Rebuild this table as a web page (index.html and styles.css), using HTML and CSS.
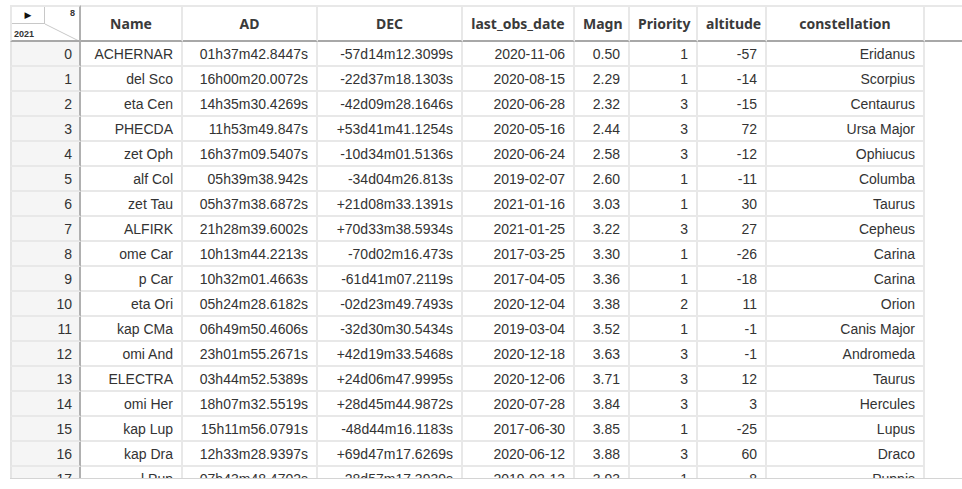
FILE: index.html
```html
<!DOCTYPE html>
<html>
<head>
<meta charset="utf-8">
<link rel="stylesheet" href="styles.css">
</head>
<body>
<div class="viewport">
<table class="df">
<thead>
<tr>
<th class="corner">
  <span class="corner-play">▶</span>
  <span class="corner-count">8</span>
  <span class="corner-year">2021</span>
  <svg class="corner-diag" width="69" height="35" viewBox="0 0 69 35"><line x1="33" y1="17" x2="69" y2="35" stroke="#c8c8c8" stroke-width="1"/></svg>
</th>
<th class="c-name">Name</th>
<th class="c-ad">AD</th>
<th class="c-dec">DEC</th>
<th class="c-date">last_obs_date</th>
<th class="c-magn">Magn</th>
<th class="c-prio">Priority</th>
<th class="c-alt">altitude</th>
<th class="c-const">constellation</th>
<th class="c-fill"></th>
</tr>
</thead>
<tbody>
<tr><td class="idx">0</td><td>ACHERNAR</td><td>01h37m42.8447s</td><td>-57d14m12.3099s</td><td>2020-11-06</td><td>0.50</td><td>1</td><td>-57</td><td>Eridanus</td></tr>
<tr><td class="idx">1</td><td>del Sco</td><td>16h00m20.0072s</td><td>-22d37m18.1303s</td><td>2020-08-15</td><td>2.29</td><td>1</td><td>-14</td><td>Scorpius</td></tr>
<tr><td class="idx">2</td><td>eta Cen</td><td>14h35m30.4269s</td><td>-42d09m28.1646s</td><td>2020-06-28</td><td>2.32</td><td>3</td><td>-15</td><td>Centaurus</td></tr>
<tr><td class="idx">3</td><td>PHECDA</td><td>11h53m49.847s</td><td>+53d41m41.1254s</td><td>2020-05-16</td><td>2.44</td><td>3</td><td>72</td><td>Ursa Major</td></tr>
<tr><td class="idx">4</td><td>zet Oph</td><td>16h37m09.5407s</td><td>-10d34m01.5136s</td><td>2020-06-24</td><td>2.58</td><td>3</td><td>-12</td><td>Ophiucus</td></tr>
<tr><td class="idx">5</td><td>alf Col</td><td>05h39m38.942s</td><td>-34d04m26.813s</td><td>2019-02-07</td><td>2.60</td><td>1</td><td>-11</td><td>Columba</td></tr>
<tr><td class="idx">6</td><td>zet Tau</td><td>05h37m38.6872s</td><td>+21d08m33.1391s</td><td>2021-01-16</td><td>3.03</td><td>1</td><td>30</td><td>Taurus</td></tr>
<tr><td class="idx">7</td><td>ALFIRK</td><td>21h28m39.6002s</td><td>+70d33m38.5934s</td><td>2021-01-25</td><td>3.22</td><td>3</td><td>27</td><td>Cepheus</td></tr>
<tr><td class="idx">8</td><td>ome Car</td><td>10h13m44.2213s</td><td>-70d02m16.473s</td><td>2017-03-25</td><td>3.30</td><td>1</td><td>-26</td><td>Carina</td></tr>
<tr><td class="idx">9</td><td>p Car</td><td>10h32m01.4663s</td><td>-61d41m07.2119s</td><td>2017-04-05</td><td>3.36</td><td>1</td><td>-18</td><td>Carina</td></tr>
<tr><td class="idx">10</td><td>eta Ori</td><td>05h24m28.6182s</td><td>-02d23m49.7493s</td><td>2020-12-04</td><td>3.38</td><td>2</td><td>11</td><td>Orion</td></tr>
<tr><td class="idx">11</td><td>kap CMa</td><td>06h49m50.4606s</td><td>-32d30m30.5434s</td><td>2019-03-04</td><td>3.52</td><td>1</td><td>-1</td><td>Canis Major</td></tr>
<tr><td class="idx">12</td><td>omi And</td><td>23h01m55.2671s</td><td>+42d19m33.5468s</td><td>2020-12-18</td><td>3.63</td><td>3</td><td>-1</td><td>Andromeda</td></tr>
<tr><td class="idx">13</td><td>ELECTRA</td><td>03h44m52.5389s</td><td>+24d06m47.9995s</td><td>2020-12-06</td><td>3.71</td><td>3</td><td>12</td><td>Taurus</td></tr>
<tr><td class="idx">14</td><td>omi Her</td><td>18h07m32.5519s</td><td>+28d45m44.9872s</td><td>2020-07-28</td><td>3.84</td><td>3</td><td>3</td><td>Hercules</td></tr>
<tr><td class="idx">15</td><td>kap Lup</td><td>15h11m56.0791s</td><td>-48d44m16.1183s</td><td>2017-06-30</td><td>3.85</td><td>1</td><td>-25</td><td>Lupus</td></tr>
<tr><td class="idx">16</td><td>kap Dra</td><td>12h33m28.9397s</td><td>+69d47m17.6269s</td><td>2020-06-12</td><td>3.88</td><td>3</td><td>60</td><td>Draco</td></tr>
<tr><td class="idx">17</td><td>l Pup</td><td>07h43m48.4702s</td><td>-28d57m17.3939s</td><td>2019-02-13</td><td>3.93</td><td>1</td><td>8</td><td>Puppis</td></tr>
</tbody>
</table>
</div>
</body>
</html>
```
FILE: styles.css
```css
html, body {
  margin: 0;
  padding: 0;
  background: #ffffff;
}
body {
  padding: 5px 0 0 10px;
  font-family: "Liberation Sans", Arial, sans-serif;
  color: #333333;
}
.viewport {
  height: 473px;
  overflow: hidden;
  border-bottom: 1px solid #d4d4d4;
}
.df {
  table-layout: fixed;
  border-collapse: separate;
  border-spacing: 0;
  width: 952px;
}
.df th, .df td {
  box-sizing: border-box;
  padding: 0 8px;
  border-right: 2px solid #e8e8e8;
  border-bottom: 2px solid #e8e8e8;
  white-space: nowrap;
  overflow: hidden;
}
.df th {
  height: 37px;
  padding-bottom: 1px;
  border-top: 2px solid #e8e8e8;
  border-bottom: 2px solid #a8a8a8;
  font-family: "Noto Sans", "Liberation Sans", sans-serif;
  font-weight: 700;
  font-size: 14px;
  text-align: center;
  color: #3a3a3a;
  background: #ffffff;
}
.df td {
  height: 25px;
  font-size: 14px;
  text-align: right;
  color: #333333;
}
.df th.corner {
  width: 71px;
  position: relative;
  padding: 0;
  border-left: 2px solid #e8e8e8;
  border-right: 2px solid #b0b0b0;
}
.corner-play {
  position: absolute;
  left: 0;
  top: 0;
  width: 32px;
  height: 16px;
  border-right: 1px solid #c8c8c8;
  border-bottom: 1px solid #c8c8c8;
  font-size: 9px;
  line-height: 16px;
  text-align: center;
  color: #111111;
  font-family: "DejaVu Sans", sans-serif;
}
.corner-count {
  position: absolute;
  right: 4px;
  top: 1px;
  font-size: 9px;
  font-weight: 700;
  font-family: "Liberation Sans", sans-serif;
  color: #333333;
}
.corner-year {
  position: absolute;
  left: 2px;
  top: 22px;
  font-size: 9px;
  font-weight: 700;
  font-family: "Liberation Sans", sans-serif;
  color: #333333;
}
.corner-diag {
  position: absolute;
  left: 0;
  top: 0;
}
.c-name { width: 102px; }
.c-ad { width: 135px; }
.c-dec { width: 145px; }
.c-date { width: 112px; }
.c-magn { width: 55px; }
.c-prio { width: 68px; }
.c-alt { width: 69px; }
.c-const { width: 158px; }
.df th.c-fill { border-right: none; }
.df td.idx {
  background: #f5f5f5;
  border-left: 2px solid #e4e4e4;
  border-right: 2px solid #b0b0b0;
  padding-right: 7px;
}
```
